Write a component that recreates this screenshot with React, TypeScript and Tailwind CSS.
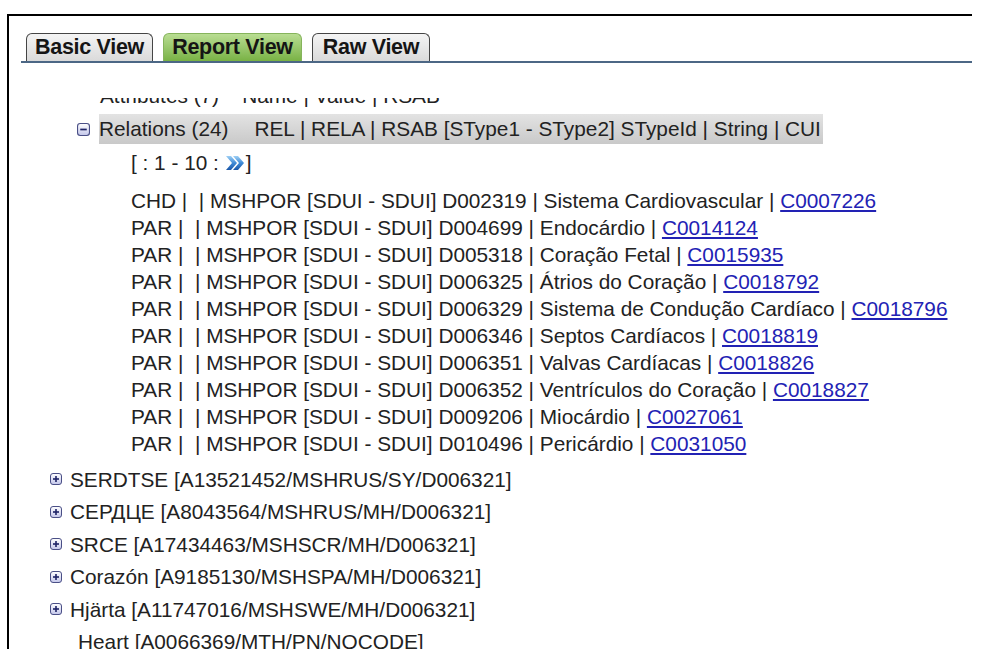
import React from 'react';

const font = "font-['Liberation_Sans',Arial,sans-serif]";

interface Relation {
  rel: string;
  sdui: string;
  name: string;
  cui: string;
}

const relations: Relation[] = [
  { rel: 'CHD', sdui: 'D002319', name: 'Sistema Cardiovascular', cui: 'C0007226' },
  { rel: 'PAR', sdui: 'D004699', name: 'Endocárdio', cui: 'C0014124' },
  { rel: 'PAR', sdui: 'D005318', name: 'Coração Fetal', cui: 'C0015935' },
  { rel: 'PAR', sdui: 'D006325', name: 'Átrios do Coração', cui: 'C0018792' },
  { rel: 'PAR', sdui: 'D006329', name: 'Sistema de Condução Cardíaco', cui: 'C0018796' },
  { rel: 'PAR', sdui: 'D006346', name: 'Septos Cardíacos', cui: 'C0018819' },
  { rel: 'PAR', sdui: 'D006351', name: 'Valvas Cardíacas', cui: 'C0018826' },
  { rel: 'PAR', sdui: 'D006352', name: 'Ventrículos do Coração', cui: 'C0018827' },
  { rel: 'PAR', sdui: 'D009206', name: 'Miocárdio', cui: 'C0027061' },
  { rel: 'PAR', sdui: 'D010496', name: 'Pericárdio', cui: 'C0031050' },
];

const atoms = [
  { label: 'SERDTSE [A13521452/MSHRUS/SY/D006321]', open: false },
  { label: 'СЕРДЦЕ [A8043564/MSHRUS/MH/D006321]', open: false },
  { label: 'SRCE [A17434463/MSHSCR/MH/D006321]', open: false },
  { label: 'Corazón [A9185130/MSHSPA/MH/D006321]', open: false },
  { label: 'Hjärta [A11747016/MSHSWE/MH/D006321]', open: false },
];

const ToggleIcon = ({ expanded, size = 12 }: { expanded: boolean; size?: number }) => (
  <svg width={size} height={size} viewBox="0 0 12 12" className="shrink-0">
    <defs>
      <linearGradient id={expanded ? 'tg-minus' : 'tg-plus'} x1="0" y1="0" x2="0" y2="1">
        <stop offset="0" stopColor="#ffffff" />
        <stop offset="1" stopColor="#c3c6ea" />
      </linearGradient>
    </defs>
    <rect x="0.5" y="0.5" width="11" height="11" rx="2.5" fill={`url(#${expanded ? 'tg-minus' : 'tg-plus'})`} stroke="#4a4f86" />
    <rect x="3" y="5.2" width="6" height="1.6" fill="#1f2466" />
    {!expanded && <rect x="5.2" y="3" width="1.6" height="6" fill="#1f2466" />}
  </svg>
);

const NextIcon = () => (
  <svg width="21" height="18" viewBox="0 0 21 18" className="inline-block align-[-2px]">
    <defs>
      <linearGradient id="next-grad" x1="0" y1="0" x2="0" y2="1">
        <stop offset="0" stopColor="#9fd0f5" />
        <stop offset="0.5" stopColor="#3e8ad6" />
        <stop offset="1" stopColor="#1a56a8" />
      </linearGradient>
    </defs>
    <path d="M1 2 L6 2 L12 9 L6 16 L1 16 L7 9 Z" fill="url(#next-grad)" />
    <path d="M8 2 L13 2 L19 9 L13 16 L8 16 L14 9 Z" fill="url(#next-grad)" />
  </svg>
);

const Tab = ({ label, active, width }: { label: string; active?: boolean; width: string }) => (
  <div
    className={`${width} h-[28px] flex items-center justify-center rounded-t-[6px] border-[1.5px] border-b-0 text-[21.5px] font-bold tracking-[-0.3px] text-[#151515] ${
      active
        ? 'border-[#86b45c] bg-gradient-to-b from-[#b9dd92] to-[#79b244]'
        : 'border-[#454545] bg-gradient-to-b from-[#f4f4f4] to-[#dadada]'
    }`}
  >
    {label}
  </div>
);

export default function App() {
  return (
    <div className={`h-[649px] overflow-hidden bg-white ${font} text-[#222]`}>
      <div className="ml-[7px] mt-[14px] w-[965px] h-[700px] border-t-2 border-l-2 border-black">
        {/* view tabs */}
        <div className="pl-[12px] pt-[17px]">
          <div className="flex items-end gap-[10px] pl-[5px] border-b-2 border-[#4c6785]">
            <Tab label="Basic View" width="w-[127px]" />
            <Tab label="Report View" width="w-[139px]" active />
            <Tab label="Raw View" width="w-[118px]" />
          </div>
        </div>

        {/* report tree, scrolled so the attributes header sits under the top edge */}
        <div className="mt-[35px] overflow-hidden text-[20.8px]">
          <div className="-mt-[16px] h-[27px] leading-[27px] pl-[91px] whitespace-pre">
            {'Attributes (7)    Name | Value | RSAB'}
          </div>

          <div className="mt-[5px] h-[30px] flex items-center pl-[68px]">
            <ToggleIcon expanded size={13} />
            <div className="ml-[9px] h-[30px] w-[724px] flex items-center bg-gradient-to-b from-[#e3e3e3] to-[#c9c9c9]">
              <span>Relations (24)</span>
              <span className="ml-[26px]">REL | RELA | RSAB [SType1 - SType2] STypeId | String | CUI</span>
            </div>
          </div>

          <div className="mt-[5px] h-[27px] leading-[27px] pl-[122px] whitespace-pre">
            {'[ : 1 - 10 : '}
            <NextIcon />]
          </div>

          <div className="mt-[11px] pl-[122px]">
            {relations.map((r) => (
              <div key={r.sdui} className="h-[27px] leading-[27px] whitespace-pre">
                {`${r.rel} |  | MSHPOR [SDUI - SDUI] ${r.sdui} | ${r.name} | `}
                <a href="#" className="text-[#2222b4] underline underline-offset-2">
                  {r.cui}
                </a>
              </div>
            ))}
          </div>

          <div className="mt-[6px]">
            {atoms.map((a) => (
              <div key={a.label} className="h-[32.5px] flex items-center pl-[41px] gap-[8px]">
                <ToggleIcon expanded={a.open} />
                <span>{a.label}</span>
              </div>
            ))}
            <div className="h-[32.5px] flex items-center pl-[69px]">Heart [A0066369/MTH/PN/NOCODE]</div>
          </div>
        </div>
      </div>
    </div>
  );
}
